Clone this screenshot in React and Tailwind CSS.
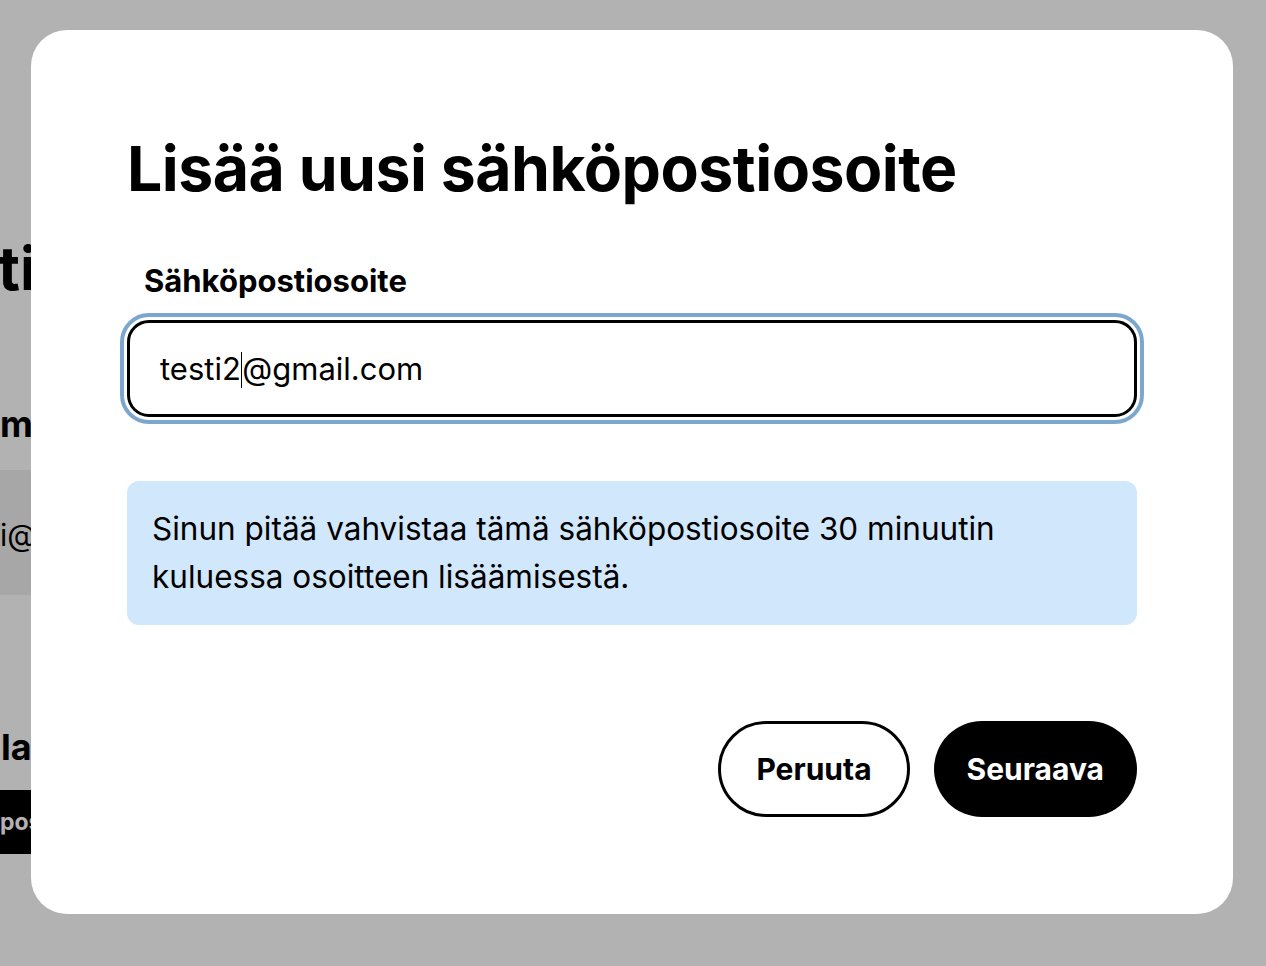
import React from 'react'

const font = { fontFamily: 'Inter, "Noto Sans", sans-serif' }

// shows `shown` starting at the page's left edge, with `hidden` running off to the left
function Peek({ hidden, shown }) {
  return (
    <div className="flex whitespace-nowrap">
      <span className="w-0 flex justify-end">
        <span>{hidden}</span>
      </span>
      <span>{shown}</span>
    </div>
  )
}

function BackgroundPage() {
  return (
    <div className="min-h-[966px] bg-white text-black overflow-hidden">
      <div className="pt-[232px] flex flex-col">
        <div className="text-[60px] font-bold leading-[72px] ml-[-2px]">
          <Peek hidden="Yhteys" shown="tiedot" />
        </div>
        <div className="mt-[98px] text-[36px] font-bold leading-[44px]">
          <Peek hidden="Il" shown="moitukset" />
        </div>
        <div className="mt-[24px] h-[125px] w-[700px] bg-[#f0f0f0] flex items-center pt-[6px] text-[30px]">
          <Peek hidden="test" shown="i@gmail.com" />
        </div>
        <div className="mt-[130px] text-[36px] font-bold leading-[44px] ml-[1px]">
          <Peek hidden="Pa" shown="lautusosoite" />
        </div>
        <div className="mt-[21px] h-[64px] w-[400px] bg-black text-white font-bold text-[23px] flex items-center">
          <Peek hidden="Lisää sähkö" shown="postiosoite" />
        </div>
      </div>
    </div>
  )
}

export default function App() {
  return (
    <div className="relative w-[1266px] h-[966px] overflow-hidden" style={font}>
      <BackgroundPage />
      <div className="absolute inset-0 bg-black/30" />
      <div className="absolute left-[31px] top-[30px] w-[1202px] h-[884px] bg-white rounded-[36px] px-[96px] pt-[100px] flex flex-col">
        <h1 className="text-[62.5px] font-bold leading-[76px] text-black tracking-[-0.5px]">
          Lisää uusi sähköpostiosoite
        </h1>
        <label className="mt-[55px] ml-[17px] text-[31px] font-bold leading-[40px] text-black">
          Sähköpostiosoite
        </label>
        <div className="mt-[19px] h-[97px] border-[3px] border-black rounded-[22px] outline-[4px] outline-[#7ba7cf] outline-offset-[3px] flex items-center pl-[30px] pt-[2px] text-[31px] text-black">
          <span>testi2</span>
          <span className="w-[1.5px] h-[36px] bg-black" />
          <span>@gmail.com</span>
        </div>
        <div className="mt-[64px] bg-[#d1e7fb] rounded-[12px] px-[25px] py-[24px] text-[31.5px] leading-[48px] text-black">
          Sinun pitää vahvistaa tämä sähköpostiosoite 30 minuutin
          <br />
          kuluessa osoitteen lisäämisestä.
        </div>
        <div className="mt-[96px] flex justify-end gap-[24px]">
          <button className="h-[96px] px-[35px] rounded-full border-[3px] border-black bg-white text-black text-[30px] font-bold">
            Peruuta
          </button>
          <button className="h-[96px] px-[33px] rounded-full bg-black text-white text-[30px] font-bold">
            Seuraava
          </button>
        </div>
      </div>
    </div>
  )
}
